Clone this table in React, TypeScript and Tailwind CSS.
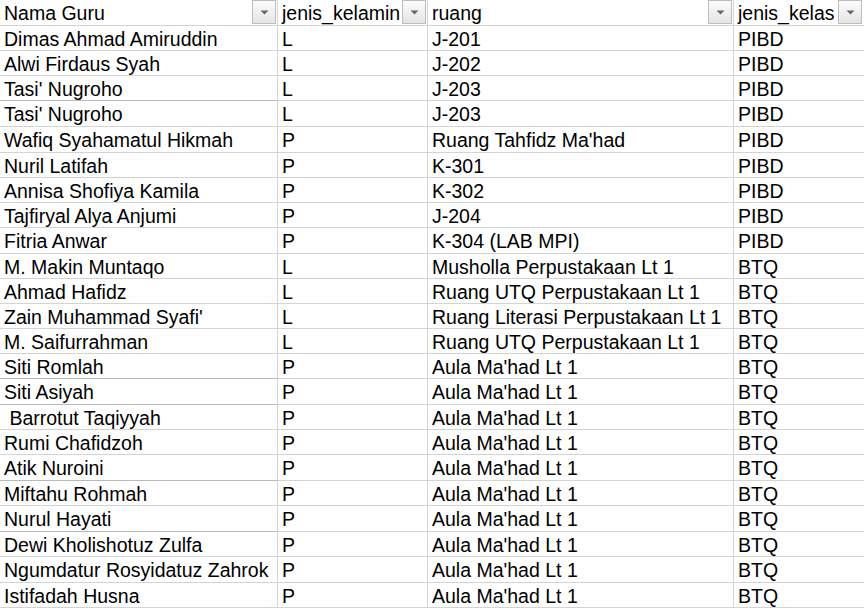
import React from "react";

type Row = [string, string, string, string];

const rows: Row[] = [
  ["Dimas Ahmad Amiruddin", "L", "J-201", "PIBD"],
  ["Alwi Firdaus Syah", "L", "J-202", "PIBD"],
  ["Tasi' Nugroho", "L", "J-203", "PIBD"],
  ["Tasi' Nugroho", "L", "J-203", "PIBD"],
  ["Wafiq Syahamatul Hikmah", "P", "Ruang Tahfidz Ma'had", "PIBD"],
  ["Nuril Latifah", "P", "K-301", "PIBD"],
  ["Annisa Shofiya Kamila", "P", "K-302", "PIBD"],
  ["Tajfiryal Alya Anjumi", "P", "J-204", "PIBD"],
  ["Fitria Anwar", "P", "K-304 (LAB MPI)", "PIBD"],
  ["M. Makin Muntaqo", "L", "Musholla Perpustakaan Lt 1", "BTQ"],
  ["Ahmad Hafidz", "L", "Ruang UTQ Perpustakaan Lt 1", "BTQ"],
  ["Zain Muhammad Syafi'", "L", "Ruang Literasi Perpustakaan Lt 1", "BTQ"],
  ["M. Saifurrahman", "L", "Ruang UTQ Perpustakaan Lt 1", "BTQ"],
  ["Siti Romlah", "P", "Aula Ma'had Lt 1", "BTQ"],
  ["Siti Asiyah", "P", "Aula Ma'had Lt 1", "BTQ"],
  [" Barrotut Taqiyyah", "P", "Aula Ma'had Lt 1", "BTQ"],
  ["Rumi Chafidzoh", "P", "Aula Ma'had Lt 1", "BTQ"],
  ["Atik Nuroini", "P", "Aula Ma'had Lt 1", "BTQ"],
  ["Miftahu Rohmah", "P", "Aula Ma'had Lt 1", "BTQ"],
  ["Nurul Hayati", "P", "Aula Ma'had Lt 1", "BTQ"],
  ["Dewi Kholishotuz Zulfa", "P", "Aula Ma'had Lt 1", "BTQ"],
  ["Ngumdatur Rosyidatuz Zahrok", "P", "Aula Ma'had Lt 1", "BTQ"],
  ["Istifadah Husna", "P", "Aula Ma'had Lt 1", "BTQ"],
];

const tallRows = new Set([4, 5, 9, 15, 18, 20, 22]);
const shadedRows = new Set([3, 14, 15, 18, 20]);

function FilterButton() {
  return (
    <div className="flex h-[24px] w-[24px] shrink-0 items-center justify-center border border-[#bdbdbd] bg-gradient-to-b from-[#fdfdfd] to-[#e4e4e4]">
      <svg width="9" height="5" viewBox="0 0 9 5">
        <polygon points="0.5,0.5 8.5,0.5 4.5,4.5" fill="#666666" />
      </svg>
    </div>
  );
}

function HeaderCell({ label, last }: { label: string; last?: boolean }) {
  return (
    <div
      className={
        last
          ? "flex h-[26px] items-start justify-between border-b border-[#d4d4d4] pl-1 pr-[2px]"
          : "flex h-[26px] items-start justify-between border-b border-r border-[#d4d4d4] pl-1 pr-[1px]"
      }
    >
      <span className="pt-[2px] leading-[23px]">{label}</span>
      <FilterButton />
    </div>
  );
}

export default function App() {
  return (
    <div
      className="h-[609px] w-[864px] overflow-hidden bg-white text-[19.5px] text-black"
      style={{ fontFamily: '"Liberation Sans", Arial, sans-serif' }}
    >
      <div className="grid grid-cols-[278px_150px_306px_1fr]">
        <HeaderCell label="Nama Guru" />
        <HeaderCell label="jenis_kelamin" />
        <HeaderCell label="ruang" />
        <HeaderCell label="jenis_kelas" last />
        {rows.map((r, i) => {
          const tall = tallRows.has(i + 1);
          const shaded = shadedRows.has(i + 1);
          return r.map((c, j) => (
            <div
              key={`${i}-${j}`}
              className={
                (tall ? "h-[26px] " : "h-[25px] ") +
                (j === 3
                  ? "overflow-hidden whitespace-pre border-b border-[#d4d4d4] pl-1 pt-[2px] leading-[22px]"
                  : j === 0 && shaded
                  ? "overflow-hidden whitespace-pre border-b border-r border-[#d4d4d4] border-b-[#b9b9b9] pl-1 pt-[2px] leading-[22px]"
                  : "overflow-hidden whitespace-pre border-b border-r border-[#d4d4d4] pl-1 pt-[2px] leading-[22px]")
              }
            >
              {c}
            </div>
          ));
        })}
      </div>
    </div>
  );
}
